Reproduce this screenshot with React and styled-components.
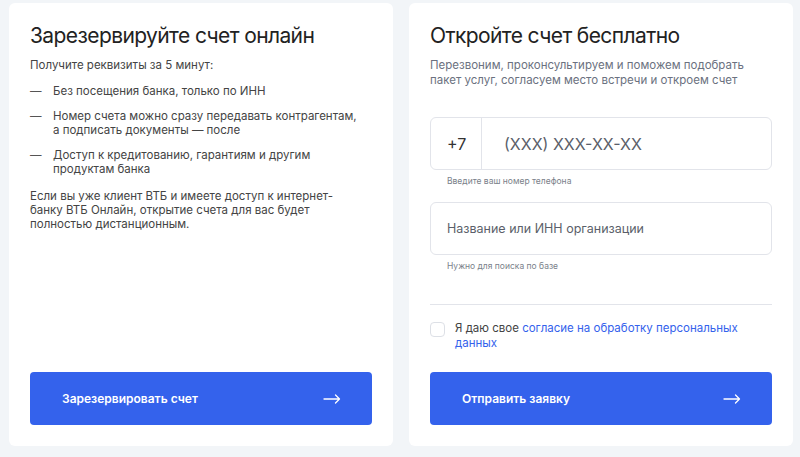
import styled, { createGlobalStyle } from "styled-components";

const GlobalStyle = createGlobalStyle`
  html, body {
    margin: 0;
    padding: 0;
    background: #f2f5f8;
  }
  body {
    font-family: Inter, "Noto Sans", sans-serif;
    color: #222;
  }
`;

const Page = styled.div`
  display: flex;
  gap: 16px;
  padding: 3px 7px 11px 9px;
  width: 800px;
  height: 457px;
  box-sizing: border-box;
`;

const Card = styled.section`
  width: 384px;
  height: 443px;
  box-sizing: border-box;
  background: #fff;
  border-radius: 6px;
  padding: 19px 21px 21px 21px;
  display: flex;
  flex-direction: column;
`;

const Title = styled.h2`
  margin: 0;
  font-size: 21px;
  line-height: 28px;
  font-weight: 400;
  letter-spacing: -0.6px;
  color: #222;
`;

const Lead = styled.p`
  margin: 8px 0 0;
  font-size: 11.5px;
  line-height: 15px;
  color: ${(p) => (p.$muted ? "#6b7180" : "#444")};
`;

const List = styled.ul`
  list-style: none;
  margin: 11px 0 0;
  padding: 0;
  display: flex;
  flex-direction: column;
  gap: 11px;
`;

const Item = styled.li`
  display: flex;
  font-size: 11.5px;
  line-height: 14px;
  color: #444;

  &::before {
    content: "—";
    flex: 0 0 23px;
    color: #555;
  }
`;

const Note = styled.p`
  margin: 13px 0 0;
  font-size: 11.5px;
  line-height: 14px;
  color: #444;
`;

const Button = styled.button`
  margin-top: auto;
  height: 53px;
  width: 100%;
  border: none;
  border-radius: 4px;
  background: #3462ec;
  color: #fff;
  font-family: inherit;
  font-size: 12px;
  font-weight: 600;
  display: flex;
  align-items: center;
  justify-content: space-between;
  padding: 0 31px 0 32px;
  cursor: pointer;
`;

const Arrow = () => (
  <svg width="18" height="10" viewBox="0 0 18 10" fill="none">
    <path d="M1 5h15.5M12.5 1l4 4-4 4" stroke="#fff" strokeWidth="1.3" strokeLinecap="round" strokeLinejoin="round" />
  </svg>
);

const Form = styled.div`
  margin-top: 29px;
  display: flex;
  flex-direction: column;
`;

const Field = styled.div`
  height: 53px;
  box-sizing: border-box;
  border: 1px solid #e2e4ea;
  border-radius: 6px;
  display: flex;
  align-items: center;
  margin-top: ${(p) => p.$gap || 0}px;
`;

const Prefix = styled.div`
  width: 51px;
  align-self: stretch;
  border-right: 1px solid #e2e4ea;
  display: flex;
  align-items: center;
  padding-left: 16px;
  box-sizing: border-box;
  font-size: 16px;
  color: #333;
`;

const Placeholder = styled.span`
  padding-left: ${(p) => p.$pad}px;
  font-size: ${(p) => p.$size}px;
  color: #5b5f6a;
`;

const Hint = styled.div`
  margin: 6px 0 0 17px;
  font-size: 8.5px;
  line-height: 11px;
  color: #7a7f8a;
`;

const Divider = styled.hr`
  margin: 32px 0 0;
  border: none;
  border-top: 1px solid #e2e4ea;
`;

const Consent = styled.div`
  margin-top: 16px;
  display: flex;
  gap: 10px;
  font-size: 11.5px;
  line-height: 15px;
  color: #444;
`;

const Box = styled.span`
  flex: 0 0 15px;
  height: 15px;
  box-sizing: border-box;
  border: 1px solid #dde0e6;
  border-radius: 4px;
  margin-top: 1px;
`;

const ConsentText = styled.p`
  margin: 0;
`;

const Link = styled.a`
  color: #3462ec;
  text-decoration: none;
`;

export default function App() {
  return (
    <>
      <GlobalStyle />
      <Page>
        <Card>
          <Title>Зарезервируйте счет онлайн</Title>
          <Lead>Получите реквизиты за 5 минут:</Lead>
          <List>
            <Item>Без посещения банка, только по ИНН</Item>
            <Item>
              Номер счета можно сразу передавать контрагентам,
              <br />
              а подписать документы — после
            </Item>
            <Item>
              Доступ к кредитованию, гарантиям и другим
              <br />
              продуктам банка
            </Item>
          </List>
          <Note>
            Если вы уже клиент ВТБ и имеете доступ к интернет-
            <br />
            банку ВТБ Онлайн, открытие счета для вас будет
            <br />
            полностью дистанционным.
          </Note>
          <Button>
            Зарезервировать счет
            <Arrow />
          </Button>
        </Card>
        <Card>
          <Title>Откройте счет бесплатно</Title>
          <Lead $muted>
            Перезвоним, проконсультируем и поможем подобрать
            <br />
            пакет услуг, согласуем место встречи и откроем счет
          </Lead>
          <Form>
            <Field>
              <Prefix>+7</Prefix>
              <Placeholder $pad={22} $size={16}>(XXX) XXX-XX-XX</Placeholder>
            </Field>
            <Hint>Введите ваш номер телефона</Hint>
            <Field $gap={15}>
              <Placeholder $pad={16} $size={12.5}>Название или ИНН организации</Placeholder>
            </Field>
            <Hint>Нужно для поиска по базе</Hint>
            <Divider />
            <Consent>
              <Box />
              <ConsentText>
                Я даю свое <Link href="#">согласие на обработку персональных</Link>
                <br />
                <Link href="#">данных</Link>
              </ConsentText>
            </Consent>
          </Form>
          <Button>
            Отправить заявку
            <Arrow />
          </Button>
        </Card>
      </Page>
    </>
  );
}
